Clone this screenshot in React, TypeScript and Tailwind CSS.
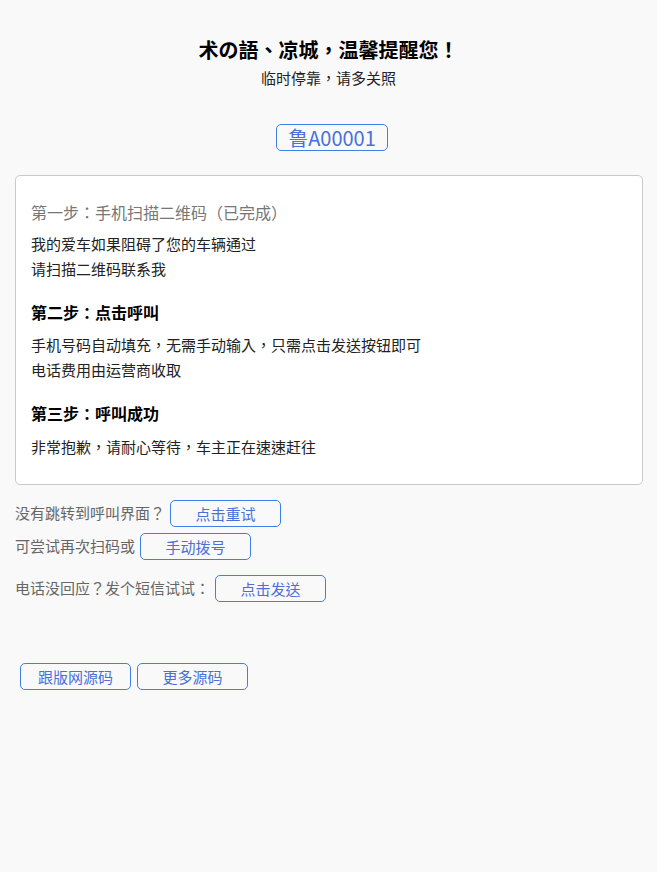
import React from 'react';

const font = { fontFamily: '"Noto Sans CJK TC", "Noto Sans CJK SC", "Noto Sans", sans-serif' };

const LinkButton = ({ children }: { children: React.ReactNode }) => (
  <button
    type="button"
    className="w-[111px] h-[27px] rounded-[5px] border border-[#3f80e8] bg-transparent text-[15px] leading-[25px] text-[#4a6fd9]"
  >
    {children}
  </button>
);

const App = () => {
  return (
    <div className="min-h-[872px] bg-[#f9f9f9] pt-[36px]" style={font}>
      <div className="text-center">
        <h1 className="text-[20px] leading-[28px] font-bold text-black">术の語、凉城，温馨提醒您！</h1>
        <p className="mt-[3px] text-[15px] leading-[22px] text-[#222]">临时停靠，请多关照</p>
      </div>

      <div className="mt-[35px] flex justify-center">
        <div className="w-[112px] h-[27px] ml-[7px] rounded-[5px] border border-[#3f80e8] flex items-center justify-center text-[20px] leading-[25px] text-[#4a6fd9]">
          鲁A00001
        </div>
      </div>

      <div className="mt-[24px] ml-[15px] w-[628px] rounded-[5px] border border-[#c9c9c9] bg-white px-[15px] pt-[24px] pb-[25px]">
        <p className="text-[16px] leading-[25px] text-[#777]">第一步：手机扫描二维码（已完成）</p>
        <div className="mt-[6px] text-[15px] leading-[25px] text-[#222]">
          <p>我的爱车如果阻碍了您的车辆通过</p>
          <p>请扫描二维码联系我</p>
        </div>

        <h3 className="mt-[19px] text-[16px] leading-[25px] font-bold text-black">第二步：点击呼叫</h3>
        <div className="mt-[7px] text-[15px] leading-[25px] text-[#222]">
          <p>手机号码自动填充，无需手动输入，只需点击发送按钮即可</p>
          <p>电话费用由运营商收取</p>
        </div>

        <h3 className="mt-[19px] text-[16px] leading-[25px] font-bold text-black">第三步：呼叫成功</h3>
        <p className="mt-[8px] text-[15px] leading-[25px] text-[#222]">非常抱歉，请耐心等待，车主正在速速赶往</p>
      </div>

      <div className="mt-[15px] pl-[15px] text-[15px] text-[#666]">
        <div className="flex items-center gap-[5px]">
          <span>没有跳转到呼叫界面？</span>
          <LinkButton>点击重试</LinkButton>
        </div>
        <div className="mt-[6px] flex items-center gap-[5px]">
          <span>可尝试再次扫码或</span>
          <LinkButton>手动拨号</LinkButton>
        </div>
        <div className="mt-[15px] flex items-center gap-[5px]">
          <span>电话没回应？发个短信试试：</span>
          <LinkButton>点击发送</LinkButton>
        </div>
      </div>

      <div className="mt-[61px] pl-[20px] flex gap-[6px]">
        <LinkButton>跟版网源码</LinkButton>
        <LinkButton>更多源码</LinkButton>
      </div>
    </div>
  );
};

export default App;
